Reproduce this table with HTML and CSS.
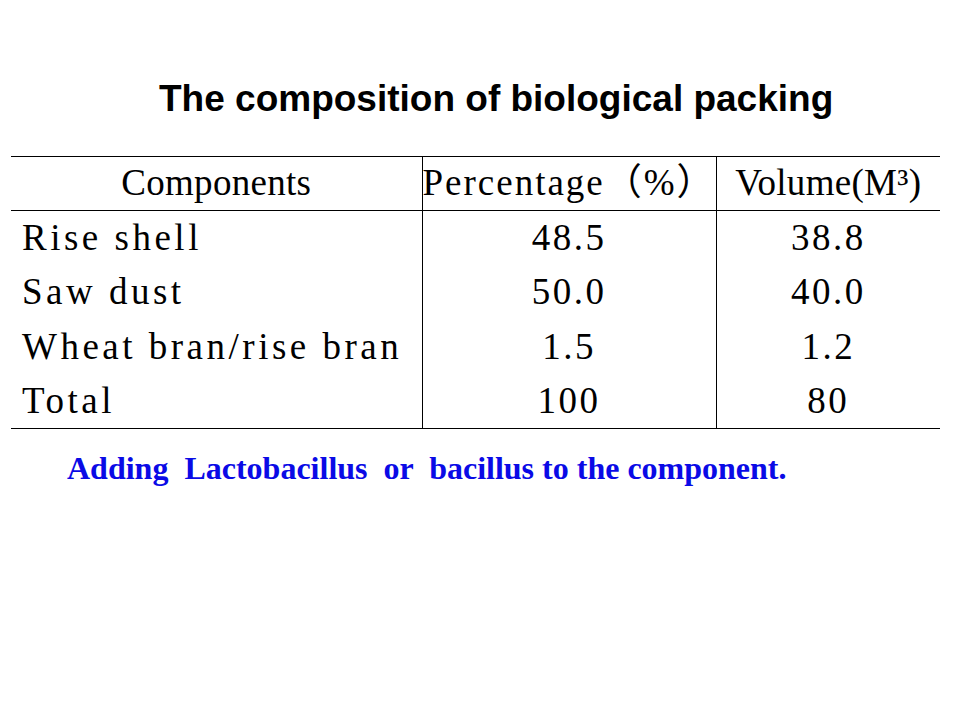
FILE: index.html
```html
<!DOCTYPE html>
<html lang="en">
<head>
    <meta charset="UTF-8">
    <meta name="viewport" content="width=device-width, initial-scale=1.0">
    <title>The composition of biological packing</title>
    <link rel="stylesheet" href="styles.css">
</head>
<body>
    <div class="slide">
        <h1 class="title">The composition of biological packing</h1>

        <table class="comp">
            <colgroup>
                <col class="col-name">
                <col class="col-pct">
                <col class="col-vol">
            </colgroup>
            <thead>
                <tr>
                    <th>Components</th>
                    <th class="pct">Percentage（%）</th>
                    <th>Volume(M³)</th>
                </tr>
            </thead>
            <tbody>
                <tr>
                    <td class="name">Rise shell</td>
                    <td>48.5</td>
                    <td>38.8</td>
                </tr>
                <tr>
                    <td class="name">Saw dust</td>
                    <td>50.0</td>
                    <td>40.0</td>
                </tr>
                <tr>
                    <td class="name">Wheat bran/rise bran</td>
                    <td>1.5</td>
                    <td>1.2</td>
                </tr>
                <tr>
                    <td class="name">Total</td>
                    <td>100</td>
                    <td>80</td>
                </tr>
            </tbody>
        </table>

        <p class="note">Adding  Lactobacillus  or  bacillus to the component.</p>
    </div>
</body>
</html>
```

FILE: styles.css
```css
* {
    margin: 0;
    padding: 0;
    box-sizing: border-box;
}

body {
    background: white;
    color: #000;
    width: 960px;
    height: 720px;
    overflow: hidden;
}

.slide {
    padding-top: 77px;
}

.title {
    font-family: 'Liberation Sans', Arial, sans-serif;
    font-weight: bold;
    font-size: 37px;
    line-height: 44px;
    padding-left: 159px;
    margin-bottom: 35px;
}

.comp {
    margin-left: 11px;
    width: 929px;
    table-layout: fixed;
    border-collapse: collapse;
    font-family: 'Liberation Serif', 'Times New Roman', 'Noto Sans CJK SC', serif;
    font-size: 37px;
    line-height: 40px;
    letter-spacing: 2.5px;
}

.col-name { width: 411px; }
.col-pct { width: 294px; }
.col-vol { width: 224px; }

.comp th,
.comp td {
    padding: 0;
    text-align: center;
    vertical-align: middle;
    font-weight: normal;
    white-space: nowrap;
    border-left: 1px solid #000;
}

.comp th {
    height: 54px;
    padding-bottom: 2px;
    letter-spacing: 0.3px;
}

.comp th.pct {
    letter-spacing: 2px;
}

.comp td {
    height: 54.5px;
}

.comp th:first-child,
.comp td:first-child {
    border-left: none;
}

.comp thead tr {
    border-top: 1px solid #000;
    border-bottom: 1px solid #000;
}

.comp tbody tr:last-child {
    border-bottom: 1px solid #000;
}

.comp td.name {
    text-align: left;
    padding-left: 11px;
    letter-spacing: 3.5px;
}

.note {
    font-family: 'Liberation Serif', 'Times New Roman', serif;
    font-weight: bold;
    font-size: 32px;
    line-height: 40px;
    color: #0a0ae6;
    white-space: pre;
    padding-left: 67px;
    margin-top: 19px;
}
```
